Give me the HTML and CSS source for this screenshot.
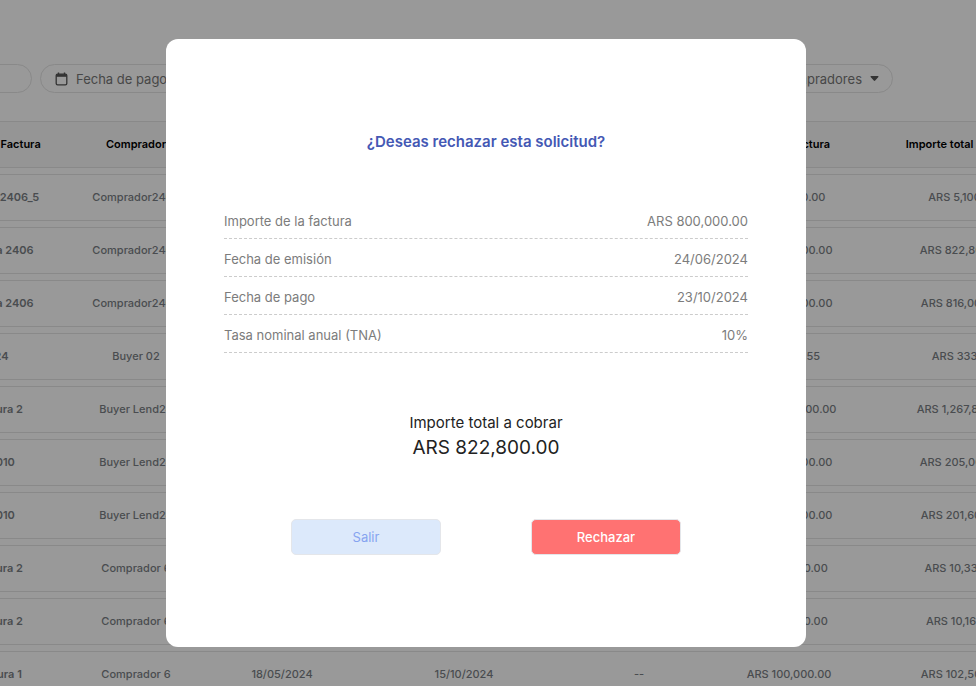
FILE: index.html
```
<!DOCTYPE html>
<html lang="es">
<head>
    <meta charset="UTF-8">
    <meta name="viewport" content="width=device-width, initial-scale=1.0">
    <title>Rechazar solicitud</title>
    <link rel="stylesheet" href="styles.css">
</head>
<body>
    <main class="page">
        <!-- Filters -->
        <div class="filters">
            <button type="button" class="pill pill-status">Estado</button>
            <button type="button" class="pill pill-date">
                <svg width="13" height="14" viewBox="0 0 13 14" aria-hidden="true">
                    <path d="M3.5 0.5v2.5M9.5 0.5v2.5" stroke="currentColor" stroke-width="1.4"/>
                    <rect x="1.2" y="2.2" width="10.6" height="10.6" rx="1.4" fill="none" stroke="currentColor" stroke-width="1.3"/>
                    <path d="M1.2 2.2h10.6v2.6H1.2z" fill="currentColor"/>
                </svg>
                Fecha de pago
            </button>
            <div class="pill pill-buyers">
                <select aria-label="Compradores">
                    <option>Compradores</option>
                </select>
                <svg width="9" height="5" viewBox="0 0 9 5" aria-hidden="true">
                    <path d="M1 0h7a.6.6 0 0 1 .4 1L5.2 4.6a1 1 0 0 1-1.4 0L.6 1A.6.6 0 0 1 1 0z" fill="currentColor"/>
                </svg>
            </div>
        </div>

        <!-- Invoices table -->
        <table class="invoices">
            <colgroup>
                <col class="col-name">
                <col class="col-buyer">
                <col class="col-issued">
                <col class="col-due">
                <col class="col-status">
                <col class="col-amount">
                <col class="col-total">
            </colgroup>
            <thead>
                <tr><th>Nombre Factura</th><th>Comprador</th><th></th><th></th><th></th><th>Importe factura</th><th>Importe total a cobrar</th></tr>
            </thead>
            <tbody>
                <tr><td>Factura 2406_5</td><td>Comprador2406</td><td></td><td></td><td></td><td>ARS 5,000.00</td><td>ARS 5,100.00</td></tr>
                <tr><td>Factura 2406</td><td>Comprador2406</td><td></td><td></td><td></td><td>ARS 800,000.00</td><td>ARS 822,800.00</td></tr>
                <tr><td>Factura 2406</td><td>Comprador2406</td><td></td><td></td><td></td><td>ARS 800,000.00</td><td>ARS 816,000.00</td></tr>
                <tr><td>024</td><td>Buyer 02</td><td></td><td></td><td></td><td>ARS 325.55</td><td>ARS 333.50</td></tr>
                <tr><td>Factura 2</td><td>Buyer Lend24</td><td></td><td></td><td></td><td>ARS 1,200,000.00</td><td>ARS 1,267,800.00</td></tr>
                <tr><td>00010</td><td>Buyer Lend24</td><td></td><td></td><td></td><td>ARS 200,000.00</td><td>ARS 205,000.00</td></tr>
                <tr><td>00010</td><td>Buyer Lend24</td><td></td><td></td><td></td><td>ARS 200,000.00</td><td>ARS 201,600.00</td></tr>
                <tr><td>Factura 2</td><td>Comprador 6</td><td></td><td></td><td></td><td>ARS 10,000.00</td><td>ARS 10,330.00</td></tr>
                <tr><td>Factura 2</td><td>Comprador 6</td><td></td><td></td><td></td><td>ARS 10,000.00</td><td>ARS 10,160.00</td></tr>
                <tr><td>Factura 1</td><td>Comprador 6</td><td>18/05/2024</td><td>15/10/2024</td><td>--</td><td>ARS 100,000.00</td><td>ARS 102,500.00</td></tr>
            </tbody>
        </table>
    </main>

    <!-- Reject confirmation -->
    <div class="overlay">
        <section class="modal" role="dialog" aria-modal="true" aria-labelledby="modalTitle">
            <h2 id="modalTitle">¿Deseas rechazar esta solicitud?</h2>
            <dl class="details">
                <div><dt>Importe de la factura</dt><dd>ARS 800,000.00</dd></div>
                <div><dt>Fecha de emisión</dt><dd>24/06/2024</dd></div>
                <div><dt>Fecha de pago</dt><dd>23/10/2024</dd></div>
                <div><dt>Tasa nominal anual (TNA)</dt><dd>10%</dd></div>
            </dl>
            <p class="total-label">Importe total a cobrar</p>
            <p class="total-amount">ARS 822,800.00</p>
            <div class="actions">
                <button type="button" class="btn btn-exit">Salir</button>
                <button type="button" class="btn btn-reject">Rechazar</button>
            </div>
        </section>
    </div>
</body>
</html>
```
FILE: styles.css
```
* {
    box-sizing: border-box;
}

body {
    margin: 0;
    font-family: Inter, "Liberation Sans", sans-serif;
    background-color: #fff;
    color: #222;
}

button, select {
    font-family: inherit;
}

/* Page behind the dialog, scrolled to the right */
.page {
    height: 100vh;
    overflow: hidden;
    padding-top: 64px;
}

/* Filters */
.filters {
    display: flex;
    gap: 8px;
    margin-left: -70px;
    margin-bottom: 22px;
}
.pill {
    display: flex;
    align-items: center;
    gap: 8px;
    height: 29px;
    padding: 0 14px;
    border: 1px solid #e4e4e4;
    border-radius: 15px;
    background-color: transparent;
    color: #777;
    font-size: 13px;
}
.pill-status {
    width: 102px;
}
.pill-date {
    width: 400px;
}
.pill-buyers {
    width: 445px;
    padding-right: 13px;
}
.pill-buyers select {
    flex: 1;
    appearance: none;
    border: 0;
    background: none;
    color: #777;
    font-size: 13px;
    text-align-last: right;
}
.pill svg {
    color: #555;
}

/* Invoices table */
.invoices {
    table-layout: fixed;
    width: 1126px;
    margin-left: -70px;
    border-collapse: separate;
    border-spacing: 0 6px;
    font-size: 11px;
    text-align: center;
}
.col-name { width: 136px; }
.col-buyer { width: 140px; }
.col-issued { width: 152px; }
.col-due { width: 212px; }
.col-status { width: 138px; }
.col-amount { width: 162px; }
.col-total { width: 186px; }

.invoices th, .invoices td {
    height: 47px;
    padding: 0 0 2px;
    border: solid #e4e4e4;
    border-width: 1px 0;
    white-space: nowrap;
}
.invoices th {
    background-color: #f9f9f9;
    color: #000;
    font-weight: 600;
}
.invoices td {
    color: #7b7f85;
    font-weight: 500;
}
.invoices td:first-child {
    font-weight: 600;
}

/* Dialog */
.overlay {
    position: fixed;
    inset: 0;
    display: flex;
    align-items: center;
    justify-content: center;
    padding-right: 4px;
    background-color: rgba(0, 0, 0, 0.4);
}
.modal {
    width: 640px;
    max-width: 100%;
    padding: 92px 58px;
    border-radius: 12px;
    background-color: #fff;
    text-align: center;
}
.modal h2 {
    margin: 0 0 48px;
    color: #4458b4;
    font-size: 15px;
    font-weight: 600;
    line-height: 22px;
}

.details {
    margin: 0 0 58px;
    color: #7c7c7c;
    font-size: 13px;
}
.details div {
    display: flex;
    justify-content: space-between;
    align-items: flex-end;
    height: 38px;
    padding-bottom: 8px;
    border-bottom: 1px dashed #ccc;
    line-height: 18px;
}
.details dd {
    margin: 0;
}

.total-label {
    margin: 0;
    font-size: 15px;
    line-height: 24px;
}
.total-amount {
    margin: 0;
    font-size: 19px;
    line-height: 26px;
}

/* Dialog buttons */
.actions {
    display: flex;
    justify-content: center;
    gap: 90px;
    margin-top: 58px;
}
.btn {
    width: 150px;
    height: 36px;
    border: 1px solid #e4e6ea;
    border-radius: 5px;
    font-size: 13px;
}
.btn-exit {
    background-color: #dce9fb;
    color: #86a4f0;
}
.btn-reject {
    background-color: #ff7272;
    color: #fff;
    font-weight: 500;
}
```
